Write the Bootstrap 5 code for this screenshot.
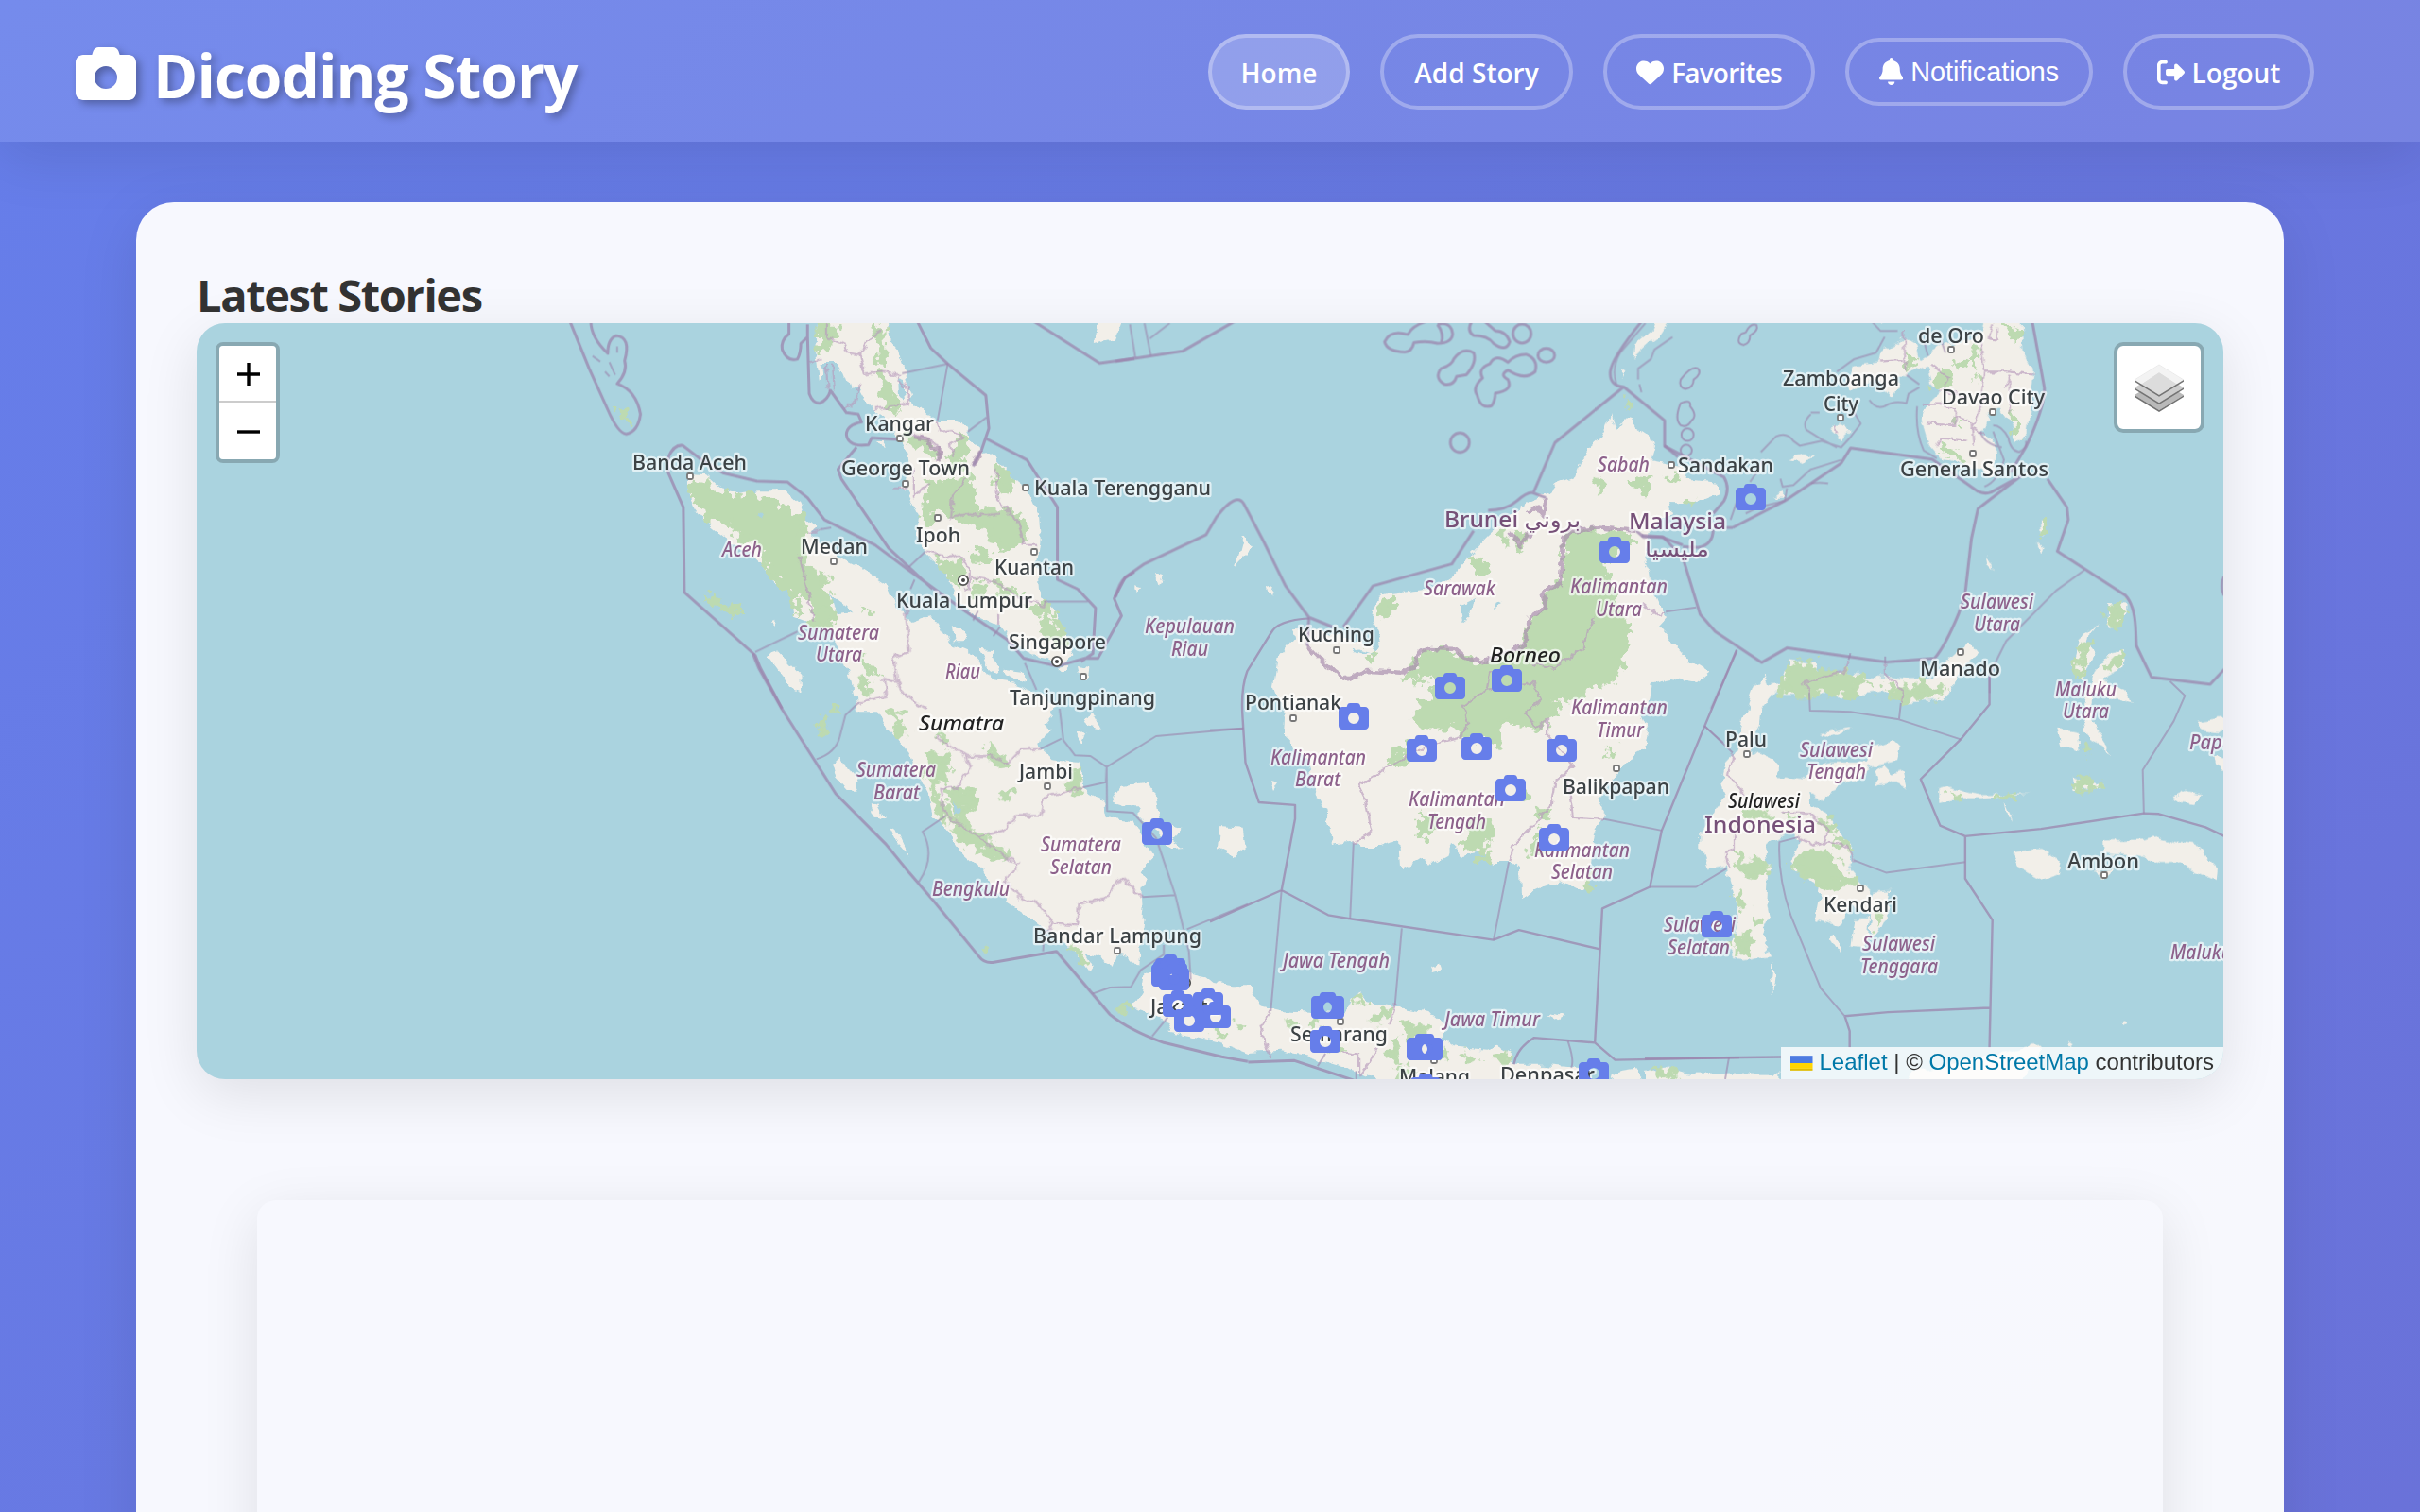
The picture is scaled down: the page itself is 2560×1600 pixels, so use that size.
<!DOCTYPE html>
<html lang="en">
<head>
<meta charset="utf-8">
<meta name="viewport" content="width=device-width, initial-scale=1">
<title>Dicoding Story</title>
<link href="https://cdn.jsdelivr.net/npm/bootstrap@5.3.0/dist/css/bootstrap.min.css" rel="stylesheet">
<style>
html, body { height: 1600px; overflow: hidden; }
body { font-family: "Open Sans", "Noto Sans", sans-serif; color: #333; background: linear-gradient(135deg, #667eea 0%, #764ba2 100%) 0 0 / 100% 15000px no-repeat; }
.topbar { height: 150px; padding: 36px 112px 34px 80px; background: rgba(255,255,255,.1); box-shadow: 0 16px 64px rgba(0,0,0,.1); }
.brand-title { font-size: 64px; font-weight: 700; line-height: 72px; letter-spacing: -1px; gap: 18px; text-shadow: 4px 4px 8px rgba(0,0,0,.3); white-space: nowrap; }
.brand-title span { padding-top: 8px; }
.brand-title svg { width: 64px; height: 64px; margin-top: 4px; filter: drop-shadow(4px 4px 4px rgba(0,0,0,.3)); }
.topnav { gap: 32px; }
.pill { height: 80px; border: 4px solid rgba(255,255,255,.3); border-radius: 50px; font-size: 28px; font-weight: 600; color: #fff; gap: 8px; white-space: nowrap; text-decoration: none; background: none; padding: 1px 0 0; line-height: 40px; }
.pill.current { background: rgba(255,255,255,.2); }
.pill svg { height: 29px; flex: none; margin-bottom: 1px; }
.w-home { width: 150px; } .w-add { width: 204px; } .w-fav { width: 224px; letter-spacing: -.8px; } .w-note { width: 262px; } .w-out { width: 202px; }
.pill.w-note { height: 72px; font: 400 28.8px "Liberation Sans", Arial, sans-serif; }
.pill.w-note svg { height: 29px; margin-bottom: 3px; }
.panel { margin: 64px 144px 0; padding: 64px; height: 1700px; border-radius: 40px; background: rgba(255,255,255,.95); box-shadow: 0 16px 64px rgba(0,0,0,.1); }
.panel h2 { font-size: 47px; font-weight: 700; line-height: 60px; padding-top: 4px; letter-spacing: -1.4px; color: #333; }
.story-map { height: 800px; border-radius: 30px; background: #aad3df; box-shadow: 0 16px 60px rgba(0,0,0,.1); }
.story-list { margin: 128px 64px 0; height: 900px; border-radius: 20px; box-shadow: 0 16px 60px rgba(0,0,0,.1); }
.land path { fill: #f2efe9; }
.wood path { fill: #bddab1; stroke: #bddab1; stroke-width: 5px; vector-effect: non-scaling-stroke; stroke-linejoin: round; }
.sea path { fill: #aad3df; }
.edge path, .edge ellipse { fill: none; stroke: #9b86ae; stroke-opacity: .75; stroke-width: 3px; vector-effect: non-scaling-stroke; stroke-linejoin: round; }
.edge .thin { stroke-width: 2px; stroke-opacity: .6; }
.edge .prov { stroke: #b79abb; stroke-width: 2.2px; stroke-opacity: .65; }
.edge .state { stroke: #a98fae; stroke-width: 4.5px; stroke-opacity: .7; }
.names text { font-family: "Noto Sans", "DejaVu Sans", sans-serif; font-size: 21.5px; font-weight: 500; paint-order: stroke; stroke: #fff; stroke-opacity: .65; stroke-width: 4.5px; stroke-linejoin: round; fill: #3c4245; }
.names .region { font-style: italic; fill: #8d618b; font-size: 21px; }
.names .isle { font-style: italic; fill: #222; }
.names .nation { fill: #765078; font-size: 23px; }
.ctl { border: 4px solid rgba(0,0,0,.2); border-radius: 8px; background-clip: padding-box; }
.zoomer { left: 20px; top: 20px; width: 68px; height: 128px; }
.zoomer button { height: 60px; background: #fff; border: 0; padding: 2px 0 0 2px; }
.zoomer button:first-child { border-bottom: 2px solid #ccc; border-radius: 4px 4px 0 0; }
.zoomer button:last-child { border-radius: 0 0 4px 4px; }
.layers { right: 20px; top: 20px; width: 96px; height: 96px; border-radius: 10px; background-color: #fff; }
.credit { right: 0; bottom: 0; height: 34px; padding: 0 10px; background: rgba(255,255,255,.8); font: 24px/32px "Liberation Sans", Arial, sans-serif; white-space: pre; width: 468px; border-radius: 0 0 30px 0; }
.credit span { padding-bottom: 2px; }
.credit a { color: #0078a8; text-decoration: none; }
.credit svg { width: 24px; height: 16px; margin-right: 7px; }
</style>
<script src="https://cdn.jsdelivr.net/npm/bootstrap@5.3.0/dist/js/bootstrap.bundle.min.js"></script>
</head>
<body>
<svg width="0" height="0" class="position-absolute" aria-hidden="true">
  <symbol id="camera" viewBox="0 0 512 512"><path fill="currentColor" d="M149.1 64.8L138.7 96H64C28.7 96 0 124.7 0 160V416c0 35.300 28.700 64 64 64H448c35.300 0 64-28.700 64-64V160c0-35.300-28.700-64-64-64H373.300L362.900 64.800C356.400 45.200 338.100 32 317.400 32H194.600c-20.700 0-39 13.200-45.500 32.800zM256 192a96 96 0 1 1 0 192 96 96 0 1 1 0-192z"/></symbol>
</svg>

<header class="topbar d-flex justify-content-between align-items-center text-white">
  <div class="brand-title d-flex align-items-center"><svg viewBox="0 0 512 512"><use href="#camera"/></svg><span>Dicoding Story</span></div>
  <nav class="topnav d-flex align-items-center">
    <a class="pill current w-home d-flex align-items-center justify-content-center" href="#">Home</a>
    <a class="pill w-add d-flex align-items-center justify-content-center" href="#">Add Story</a>
    <a class="pill w-fav d-flex align-items-center justify-content-center" href="#"><svg viewBox="0 0 512 512"><path fill="currentColor" d="M47.6 300.4L228.3 469.1c7.5 7 17.4 10.9 27.7 10.9s20.2-3.9 27.7-10.9L464.4 300.4c30.4-28.3 47.600-68 47.600-109.500v-5.800c0-69.900-50.500-129.500-119.400-141C347 36.500 300.600 51.400 268 84L256 96 244 84c-32.600-32.600-79-47.500-124.600-39.900C50.500 55.600 0 115.200 0 185.100v5.800c0 41.500 17.200 81.200 47.600 109.500z"/></svg><span>Favorites</span></a>
    <button class="pill w-note d-flex align-items-center justify-content-center"><svg viewBox="0 0 448 512"><path fill="currentColor" d="M224 0c-17.7 0-32 14.300-32 32V51.200C119 66 64 130.600 64 208v18.800c0 47-17.300 92.400-48.500 127.600l-7.400 8.300c-8.400 9.400-10.400 22.900-5.300 34.400S19.400 416 32 416H416c12.600 0 24-7.400 29.200-18.900s3.100-25-5.300-34.400l-7.400-8.300C401.300 319.200 384 273.900 384 226.800V208c0-77.400-55-142-128-156.800V32c0-17.700-14.300-32-32-32zm45.300 493.300c12-12 18.700-28.300 18.700-45.300H224 160c0 17 6.700 33.300 18.700 45.300s28.300 18.700 45.300 18.700s33.300-6.700 45.300-18.700z"/></svg><span>Notifications</span></button>
    <a class="pill w-out d-flex align-items-center justify-content-center" href="#"><svg viewBox="0 0 512 512"><path fill="currentColor" d="M377.900 105.900L500.700 228.700c7.200 7.200 11.300 17.100 11.300 27.300s-4.100 20.100-11.300 27.300L377.900 406.100c-6.400 6.400-15 9.900-24 9.900c-18.700 0-33.900-15.200-33.900-33.900l0-62.100-128 0c-17.700 0-32-14.300-32-32l0-64c0-17.700 14.300-32 32-32l128 0 0-62.100c0-18.700 15.200-33.900 33.900-33.900c9 0 17.600 3.600 24 9.900zM160 96L96 96c-17.700 0-32 14.300-32 32l0 256c0 17.700 14.300 32 32 32l64 0c17.700 0 32 14.300 32 32s-14.300 32-32 32l-64 0c-53 0-96-43-96-96L0 128C0 75 43 32 96 32l64 0c17.700 0 32 14.300 32 32s-14.300 32-32 32z"/></svg><span>Logout</span></a>
  </nav>
</header>

<main class="panel">
  <h2 class="m-0">Latest Stories</h2>
  <div class="story-map position-relative" id="map">
    <svg class="d-block" width="2144" height="800" viewBox="208 342 2144 800" style="border-radius:30px">
      <defs>
        <filter id="coast" filterUnits="userSpaceOnUse" x="200" y="330" width="2160" height="820" color-interpolation-filters="sRGB"><feTurbulence type="fractalNoise" baseFrequency=".07" numOctaves="3" seed="4"/><feDisplacementMap in="SourceGraphic" scale="11" xChannelSelector="R" yChannelSelector="G"/></filter>
        <filter id="grove" filterUnits="userSpaceOnUse" x="200" y="330" width="2160" height="820" color-interpolation-filters="sRGB"><feTurbulence type="fractalNoise" baseFrequency=".09" numOctaves="3" seed="9"/><feDisplacementMap in="SourceGraphic" scale="24" xChannelSelector="R" yChannelSelector="G"/></filter>
        <filter id="wiggle" filterUnits="userSpaceOnUse" x="200" y="330" width="2160" height="820" color-interpolation-filters="sRGB"><feTurbulence type="fractalNoise" baseFrequency=".12" numOctaves="2" seed="2"/><feDisplacementMap in="SourceGraphic" scale="8" xChannelSelector="R" yChannelSelector="G"/></filter>
      </defs>

      <g class="land" filter="url(#coast)">
        <!-- north Sumatra, Malay peninsula -->
        <g transform="translate(640 330) scale(.35714 .33333)">
          <path d="M250 515L300 520 340 560 400 575 450 568 530 568 575 610 590 650 628 685 610 715 680 770 760 815 830 865 848 905 870 945 900 980 935 1005 945 972 985 980 1010 1030 1050 1100 1110 1120 1130 1170 1180 1210 1200 1270 745 1270 730 1180 710 1110 690 1060 670 1010 620 990 560 965 550 900 500 850 460 790 380 740 300 670 265 620 242 560Z"/>
          <path d="M628 20L622 130 632 215 645 200 640 165 690 165 710 200 725 245 750 240 770 280 800 310 830 330 870 400 895 450 900 520 890 560 910 600 930 650 925 700 945 760 1000 820 1025 870 1050 930 1110 970 1170 1000 1200 1050 1290 1100 1360 1115 1390 1090 1370 1040 1340 960 1310 915 1285 880 1280 800 1290 720 1285 640 1250 560 1200 520 1160 470 1110 430 1080 400 1050 345 990 345 950 330 915 290 900 240 885 170 870 120 845 90 835 20Z"/>
          <path d="M1462 20H1535L1510 90 1450 105ZM1030 1000L1070 1010 1065 1045 1035 1045ZM480 1090L515 1078 578 1150 580 1205 555 1195ZM810 405L835 405 825 435ZM490 985L505 980 505 1000ZM870 555L890 560 880 575ZM1330 1130L1370 1125 1350 1150ZM1400 1125L1435 1130 1430 1170 1405 1150Z"/>
        </g>
        <!-- rest of Sumatra, Bangka, Belitung, Mentawai -->
        <g transform="translate(680 640) scale(.40816 .33333)">
          <path d="M510 60L530 160 540 230 553 310 610 340 640 400 690 470 710 540 740 610 750 660 790 720 830 790 885 850 900 890 940 940 990 980 1040 1030 1100 1080 1140 1130 1160 1165 1168 1150 1150 1110 1180 1120 1220 1145 1225 1110 1260 1120 1287 1155 1290 1080 1295 1020 1300 960 1297 900 1305 875 1295 850 1310 810 1322 795 1300 750 1280 710 1270 685 1200 675 1190 620 1160 600 1145 580 1140 520 1130 498 1060 490 1025 450 1030 420 1065 400 1040 380 1060 350 1065 320 1040 290 1000 270 960 250 900 240 880 190 850 150 790 120 770 70 750 40 725 45 690 60 680 20 600 0 520 0Z"/>
          <path d="M1215 630L1245 575 1310 562 1330 610 1340 690 1400 708 1375 740 1405 768 1370 772 1330 720 1290 685 1290 640 1240 640ZM1495 705L1555 710 1562 770 1535 795 1490 770ZM1140 360L1165 340 1190 395 1150 385ZM1120 410L1150 405 1138 445ZM490 500L520 482 560 590 530 590 500 550ZM592 630L605 635 625 680 605 670ZM640 700L655 705 695 805 665 760ZM870 140L910 145 920 215 895 200ZM930 200L990 210 990 250 940 225Z"/>
        </g>
        <!-- Borneo -->
        <path d="M1700 450L1704 438 1708 455 1718 443 1723 438 1731 453 1746 463 1750 473 1746 487 1778 493 1792 510 1819 513 1819 522 1792 533 1766 532 1769 543 1755 550 1750 560 1743 570 1739 593 1746 607 1748 623 1754 637 1765 652 1755 663 1769 680 1787 700 1808 713 1796 722 1769 717 1748 721 1744 747 1735 754 1744 775 1741 793 1723 803 1709 821 1696 832 1691 849 1697 861 1687 881 1685 898 1682 923 1684 930 1673 942 1651 931 1630 938 1609 948 1608 921 1598 912 1580 912 1562 902 1548 905 1534 893 1530 905 1514 914 1501 909 1482 919 1480 888 1459 896 1441 896 1423 888 1409 891 1403 858 1394 842 1384 807 1359 779 1360 758 1348 726 1353 695 1369 674 1367 667 1400 668 1421 673 1455 690 1463 677 1452 653 1457 632 1471 628 1517 623 1536 610 1555 587 1574 567 1601 543 1620 530 1645 520 1643 512 1666 503 1677 477 1693 463Z"/>
        <path d="M1307 600L1316 566 1326 580 1312 594ZM1222 608L1230 610 1226 620ZM1201 620L1208 622 1203 630ZM1342 622L1348 620 1345 632ZM1514 1023L1521 1020 1523 1026 1516 1028ZM1637 1072L1655 1076 1648 1080ZM1345 828L1352 830 1348 836Z"/>
        <!-- Mindanao, Palawan, Sulu -->
        <g transform="translate(1640 330) scale(.45918 .33333)">
          <path d="M278 20L250 80 225 105 190 150 195 100 230 60 240 20ZM815 80L790 110 765 130 760 160 700 170 680 220 690 250 740 210 760 230 790 270 808 230 790 200 820 205 870 170 880 230 900 250 870 290 855 350 870 420 900 470 960 490 1020 520 1030 440 995 390 1010 320 1040 310 1060 350 1075 415 1097 380 1105 280 1112 190 1090 130 1085 20 1000 20 980 90 900 110 850 150 840 100ZM645 375L665 360 692 380 670 405ZM550 465L580 452 605 460 580 480ZM515 590L535 570 545 590ZM165 180L175 190 168 210ZM740 20L780 20 765 45ZM1003 775L1020 795 1022 820 1008 800ZM1130 670L1140 665 1145 690 1132 710ZM1125 730L1140 750 1135 770Z"/>
        </g>
        <!-- Sulawesi, Moluccas -->
        <g transform="translate(1740 600) scale(.39541 .35077)">
          <path d="M320 320L330 355 365 350 385 280 450 290 470 320 600 330 640 330 700 340 780 340 800 290 830 260 865 225 890 260 860 290 830 340 800 400 690 410 640 375 560 385 420 385 340 385 310 430 305 480 285 520 290 560 340 580 360 630 430 640 450 600 500 590 600 590 610 540 660 525 682 550 675 585 600 605 560 640 500 670 480 700 440 680 450 720 490 745 520 800 560 850 545 910 575 950 600 980 620 1010 600 1050 550 1020 520 1080 455 1060 470 970 410 920 390 890 415 830 390 800 320 840 330 900 325 1000 335 1060 315 1110 340 1175 260 1190 230 1150 250 1080 240 1000 225 940 220 900 165 910 150 860 150 800 190 730 215 690 205 640 215 590 240 560 262 470 272 420 290 360Z"/>
          <path d="M560 1060L600 1060 590 1150 550 1145ZM610 980L658 975 650 1040 625 1100 600 1120ZM495 1120L510 1110 522 1130 518 1160ZM340 1200L348 1240 342 1290 337 1240ZM610 620L640 600 660 625 690 615 700 670 655 645 620 655ZM1212 165L1190 190 1160 220 1142 300 1165 335 1185 300 1205 260 1185 230 1190 200ZM1200 320L1240 265 1290 250 1280 300 1220 340 1280 370 1305 412 1200 375 1190 440 1205 490 1250 565 1190 520 1172 460 1180 400ZM1108 488L1160 500 1165 550 1120 540ZM1240 110L1285 115 1270 180 1238 175ZM1145 630L1225 660 1150 675ZM790 670L815 662 860 680 900 688 1030 685 900 700 830 700 790 712ZM960 705L985 770 965 740ZM980 860L1060 850 1115 890 1110 925 1060 948 1000 910ZM1225 828L1330 825 1370 815 1420 830 1480 840 1510 880 1535 910 1532 950 1470 920 1430 890 1380 890 1320 870 1225 860ZM1200 920L1260 910 1230 940ZM1470 470L1560 455V500L1490 490ZM1520 570L1560 580V625L1525 600ZM1410 695L1450 675 1490 685 1475 715 1430 710ZM940 1475L1040 1440 1060 1460 1000 1560 700 1560 720 1520ZM0 1520L60 1510 120 1530 200 1530 360 1530V1560H0ZM470 500L560 480 500 510ZM1270 1372L1285 1380 1275 1388ZM1130 1430L1145 1440 1135 1450Z"/>
        </g>
        <!-- Java, Bali -->
        <g transform="translate(1100 960) scale(.40816 .33333)">
          <path d="M265 330L240 320 265 270 270 220 290 200 390 210 430 220 450 240 500 250 545 250 570 315 620 330 700 335 790 340 805 290 830 272 850 300 905 310 960 325 1020 340 1050 370 1045 420 1070 445 1160 455 1190 440 1225 465 1230 500 1300 500 1400 510 1440 560 900 560 820 520 700 475 620 455 540 462 470 430 400 410 330 395 340 370ZM1310 335L1360 345 1340 355ZM1490 520L1540 510 1568 560H1480Z"/>
        </g>
      </g>

      <g class="wood" filter="url(#grove)">
        <g transform="translate(640 330) scale(.35714 .33333)">
          <path d="M250 545L290 550 340 580 400 585 460 592 530 620 580 660 590 690 570 760 610 830 670 850 640 870 685 950 670 990 625 985 600 900 560 890 530 880 500 830 470 790 480 750 420 720 370 680 320 650 270 610Z"/>
          <path d="M300 895L400 955 385 962 315 920ZM560 900L575 950 565 955ZM635 40H690L680 90 640 130ZM795 50L820 60 825 160 810 140ZM815 190L830 200 860 310 835 300ZM890 405L950 405 985 460 960 445ZM1055 395L1085 440 1060 490 1020 480ZM1165 490L1200 515 1195 570 1165 560ZM960 545L1070 530 1095 560 1090 620 1240 650 1245 700 1200 750 1160 735 1130 690 1060 660 1010 635 980 620 960 670 940 655ZM1090 745L1135 770 1110 795ZM980 785L1050 800 1060 865 1030 850ZM1170 865L1215 895 1170 905ZM1245 935L1305 930 1325 955 1280 965ZM1310 975L1345 1000 1355 1055 1295 1030ZM1095 855L1125 870 1110 905ZM770 940L778 955 768 960ZM755 1095L800 1150 790 1145ZM765 1165L795 1205 772 1195Z"/>
        </g>
        <g transform="translate(680 640) scale(.40816 .33333)">
          <path d="M445 0L485 0 495 40 470 60 445 50ZM462 360L476 390 470 425 460 415ZM485 334H510V338H485ZM645 342L675 350 660 365ZM660 372L682 405 662 405ZM745 470L785 480 790 555 765 570 735 540ZM735 550L790 650 850 720 940 780 936 810 880 775 835 765 795 690 765 640ZM795 582L858 592 860 645 830 640 848 705 805 640ZM902 455L955 510 940 525 902 490ZM925 602L955 602 948 615ZM1130 520L1135 570 1112 595 1105 560ZM1105 1085L1150 1130 1140 1135ZM885 1083L905 1098 892 1096ZM565 230L595 275 572 268ZM765 412L785 412 780 435Z"/>
        </g>
        <path d="M1658 567L1677 563 1717 563 1729 573 1700 590 1693 607 1704 613 1706 637 1714 650 1723 670 1716 698 1707 719 1680 728 1669 738 1644 740 1646 758 1623 770 1601 763 1585 765 1585 791 1576 780 1546 780 1550 768 1501 768 1494 754 1514 740 1518 726 1514 712 1488 717 1500 705 1500 695 1516 688 1537 691 1566 704 1609 692 1619 656 1636 644 1634 626 1652 618 1656 600Z"/>
        <path d="M1471 810L1485 790 1488 796 1485 811ZM1548 898L1554 870 1576 868 1580 880 1568 898ZM1504 862L1518 866 1510 888 1502 884ZM1564 905L1578 902 1574 914ZM1627 866L1632 860 1638 862 1630 870ZM1618 898L1636 890 1632 904ZM1557 592L1570 594 1573 602 1562 606ZM1588 562L1591 560 1591 574ZM1604 568L1614 564 1612 576 1607 575ZM1460 640L1474 635 1476 645 1463 650ZM1448 690L1456 693 1452 696ZM1688 508L1696 510 1694 518 1688 514ZM1724 508L1744 510 1742 518 1729 515ZM1762 507L1776 505 1770 509ZM1784 527L1790 530 1785 532ZM1682 936L1685 924 1678 938ZM1702 790L1706 793 1703 800ZM1500 720L1508 722 1504 726ZM1608 840L1616 838 1616 846ZM1625 880L1632 884 1624 888Z"/>
        <g transform="translate(1640 330) scale(.45918 .33333)"><path d="M925 155L955 162 945 178ZM972 105L983 112 980 175 967 150ZM902 185L925 220 900 235 885 235ZM1045 35L1080 60 1078 95 1062 70ZM932 325L943 355 927 345ZM905 425L945 460 955 475 912 448ZM1072 335L1078 395 1072 390ZM822 135L833 150 825 175ZM178 285L190 288 180 300ZM982 205L988 225 982 225ZM1133 675L1140 685 1135 705Z"/></g>
        <g transform="translate(1740 600) scale(.39541 .35077)">
          <path d="M370 365L388 285 445 295 450 318 555 325 598 355 560 362 560 380 440 380 380 380ZM650 355L690 370 700 378 738 370 730 352 755 348 760 370 795 362 790 388 690 400 655 383ZM265 740L338 740 342 756 272 756ZM375 742L405 747 400 752ZM474 760L492 765 510 798 484 788ZM420 865L495 865 508 900 560 948 480 965 432 935 395 893ZM505 825L535 832 545 847 512 838ZM245 855L262 900 300 885 320 897 318 930 262 926ZM252 985L268 1020 257 1030ZM245 1105L285 1122 268 1162 243 1158ZM297 1055L308 1078 300 1076ZM617 1045L628 1045 622 1085ZM1242 123L1280 115 1266 172 1242 172ZM1150 642L1180 632 1218 663 1155 670ZM1168 230L1200 234 1170 260 1160 322 1158 290ZM1240 300L1280 255 1272 298 1250 312ZM1174 548L1188 548 1188 556 1175 555ZM823 683L845 683 838 690ZM935 692H985V694H935ZM25 1518L58 1514 84 1538 52 1538Z"/>
        </g>
        <g transform="translate(1100 960) scale(.40816 .33333)"><path d="M452 384L475 400 460 406ZM504 372L526 380 511 383ZM205 317L235 312 232 325ZM815 288L845 300 822 298ZM864 352L900 328 896 345 862 362ZM705 380L725 372 710 386ZM945 374L1005 382 988 398 950 416ZM922 415L936 490 902 468ZM1104 474L1135 482 1110 492ZM1175 474L1222 474 1200 495ZM935 514L975 532 922 540ZM1042 455L1055 485 1046 482ZM645 370L665 368 650 380ZM763 433L785 450 762 452Z"/></g>
        <path d="M657 434L662 431 664 440 662 446 658 440Z"/>
      </g>

      <!-- lakes and bays -->
      <g class="sea" filter="url(#coast)"><path d="M880 630L894 640 902 648 886 650ZM950 400L956 402 958 424 951 420ZM802 545L808 546 806 550ZM1544 640L1560 632 1556 652 1546 660ZM1580 636L1588 638 1578 644ZM1008 846L1016 858 1010 862ZM1430 686L1456 694 1440 692Z"/></g>

      <g class="edge" filter="url(#wiggle)">
        <g transform="translate(1180 330) scale(.38265 .33333)">
          <path class="state" d="M530 1060L570 1110 640 1165 700 1140 790 1145 828 1125 840 1080 870 1068 935 1070 960 1095 1010 1115 1060 1090 1130 1060 1145 970 1190 940 1180 890 1230 860 1240 720 1260 695 1330 685 1440 695"/>
          <path class="state" d="M1090 700L1120 740 1145 700M1140 640L1165 620 1185 650 1190 590"/>
        </g>
        <g transform="translate(640 330) scale(.35714 .33333)">
          <path class="prov" d="M655 36L655 80 710 100 720 130 755 135 770 200 815 190 880 205M750 135L790 80 820 60M755 230L745 280 710 310M800 310L895 290 900 250 870 210M985 345L990 380 1030 375 1060 400 1025 420 1030 460M1160 490L1165 600 1210 650 1230 690 1240 740 1280 740M1020 655L1080 640 1130 645 1170 640M1070 530L1030 580 1025 655M950 760L1020 780 1050 770 1080 820 1080 880 1060 880M1080 840L1150 855 1240 910 1300 935 1310 915M915 500L915 585 960 540M600 700L640 690M575 770L600 880 620 980M1165 960L1165 1000M640 150L605 160M655 170L660 250M675 170L680 250M900 380L950 400 990 430 990 470M900 560L860 560"/>
          <path class="state" d="M915 395L955 405 965 430 990 435 990 475M1090 490L1115 440"/>
        </g>
        <g transform="translate(680 640) scale(.40816 .33333)">
          <path class="prov" d="M560 310L630 290 625 235 660 245 650 165 690 150 680 0M660 245L680 290 735 330M760 420L840 480 850 520 815 580 770 585 785 670M840 480L910 480 945 505 980 460 1030 458M785 670L870 735 945 805 975 820 940 880 980 930 1025 950 1065 1015 1040 1050M1065 1015L1125 1020 1130 950 1200 930 1240 865 1295 928M870 735L930 720 970 670 1030 670 1040 610 1140 580"/>
        </g>
        <g transform="translate(1280 600) scale(.35714 .35077)">
          <path class="prov" d="M425 835L480 800 460 700 440 660 520 610 640 540 740 515 765 470 750 420 820 370 830 310M820 370L960 350 980 400 935 440 965 485 1000 460 1000 510 1075 600 1020 650 1010 720 900 840 885 890M1060 640L1075 755 1165 760M950 290L1020 305 1110 240 1120 190 1140 150M1280 110L1330 150 1350 135M180 1340L150 1390 180 1480M548 1320L530 1380M390 1460L440 1470 440 1540M495 1450L470 1500 440 1540"/>
        </g>
        <g transform="translate(1740 600) scale(.39541 .35077)">
          <path class="prov" d="M545 280L530 320 500 325 425 350 440 380M643 290L645 330 690 370 685 410M560 885L540 840 480 830 450 840 410 815M235 560L225 630 270 690M240 810L240 850 215 865 225 905M370 740L440 745 490 790 480 830"/>
        </g>
        <g transform="translate(1640 330) scale(.45918 .33333)">
          <path class="prov" d="M815 60L818 190M760 155L812 150M865 355L930 360 935 310 900 290 860 290M930 330L970 350 975 420M960 410L900 400 890 430M990 90L1000 190 1060 190 1115 200M1060 200L1050 240M1000 270L970 370 1000 390M1020 40L1010 85 1030 90 1030 50M1060 200L1060 320M880 170L920 210 900 250 960 270M1000 190L990 270M655 360L660 388"/>
        </g>
      </g>

      <g class="edge">
        <g transform="translate(200 330) scale(.35714 .33333)"><path d="M1128 30L1185 180 1240 310Q1270 385 1295 388 1330 380 1337 325 1325 250 1268 228 1300 190 1290 155 1310 80 1265 76 1240 85 1240 132 1190 80 1190 30"/><path class="thin" d="M1195 140L1218 158M1245 160L1262 200M1232 190L1245 205M1268 110V130"/></g>
        <g transform="translate(640 330) scale(.35714 .33333)">
          <path d="M188 460Q205 420 230 424L280 465 350 512 450 537 540 540 600 590 650 660 800 740 900 820 1060 945 1190 1040 1240 1100 1340 1125 1420 1100 1460 1100 1530 965 1508 910 1540 845 1568 825M188 460L187 510 232 620 235 890 445 1090 460 1130 525 1260M925 30L965 115 1015 165 1128 265 1137 370 1115 440 1090 490M1130 403L1250 470 1340 620 1340 850 1400 880 1453 940 1445 1085 1410 1110M745 430L690 500 700 530 840 750 970 880M545 30V70Q520 90 525 120 540 160 570 150 580 130 580 100L600 80V40M600 80L605 260Q615 290 635 290 660 280 668 250L715 320 750 325 760 350Q715 360 715 390 720 430 780 422L790 400 870 405M1270 30L1465 163 1568 148"/>
          <path class="thin" d="M880 195L1015 165 985 345M1075 380L1130 335M900 810L950 760M905 880L917 850M445 1080L570 1015M640 690L670 685M1090 980L1105 950M1150 1030L1170 1000M1300 920L1430 920"/>
        </g>
        <g transform="translate(1180 330) scale(.38265 .33333)">
          <path d="M0 157L185 125 330 30M0 905Q10 860 28 842L80 800 250 708 280 650Q335 570 355 610L410 730 470 870 535 970 600 1000M1155 575L1215 415 1405 238 1518 345V425L1555 460M1405 238Q1365 235 1368 190 1370 150 1455 30M1030 630Q1080 630 1110 600 1140 570 1155 575L1190 590M990 695L930 800 712 870 630 1000M1440 695L1460 715 1510 715 1568 740M535 970L530 1060"/>
          <path d="M860 30Q820 45 808 72 760 55 744 95 750 125 800 128 820 125 825 98 860 90 890 100 930 100 932 70 928 30 890 40M890 40Q910 70 900 100M985 30Q970 60 990 75 1030 75 1045 100 1080 130 1090 95 1080 60 1050 60L1020 30M943 205Q935 235 910 230 880 210 900 180 930 170 935 150 960 110 990 130 1000 160 970 200ZM1085 160Q1050 130 1035 165 1000 180 1015 210 985 240 1000 265 1010 310 1040 298 1050 280 1050 258 1100 250 1085 215 1060 200 1085 185 1130 220 1160 190 1170 150 1135 135 1105 135 1085 160Z"/>
          <ellipse cx="1124" cy="69" rx="25" ry="30"/><ellipse cx="1191" cy="138" rx="23" ry="22"/><ellipse cx="952" cy="415" rx="26" ry="31"/>
          <path class="thin" d="M40 40L55 145M80 36L98 140M95 85L150 36M1385 230Q1370 180 1395 130L1465 36M1445 215V180L1480 150 1490 120 1540 80"/>
        </g>
        <g transform="translate(1640 330) scale(.45918 .33333)">
          <path d="M262 425L400 525Q415 560 400 600L375 640M420 685L540 600 670 480 692 432 880 468 985 570Q1000 580 1015 573L1085 520M1145 530L1190 620 1193 660 1168 760 1325 900Q1345 930 1348 1000L1350 1060 1385 1160 1520 1182 1556 1130M1110 30L1138 240Q1140 300 1095 430M1085 520L985 625 970 720 955 900 940 960Q910 1060 885 1100L775 1112 690 1095 545 1067 487 1113 380 1015 345 960 305 780 260 715 210 710M420 685H405M375 690Q375 740 340 748L305 745M1552 840Q1542 870 1552 900M1095 430L1060 510"/>
          <path class="thin" d="M1230 820L1165 885 1050 1045 1012 1150V1210M430 1075L370 1260M485 445L520 395Q545 380 560 410L575 425 625 410 670 430 690 400 715 355 700 320M600 320L620 320M600 325Q580 350 590 375L625 405 660 430M530 530L535 555 560 550 600 500 670 470M460 540L480 500 490 470M415 660L430 600M450 640L480 620 540 600M540 600L545 560M740 30L760 60 800 60M770 80L750 130 700 150 660 190M735 280Q750 310 770 300 790 280 820 290L825 260 850 240M845 300Q840 380 860 440L890 465M1020 360Q1040 360 1055 400 1060 440 1080 445 1100 430 1095 410M1000 555Q1030 540 1045 470L1020 380M640 545Q620 540 600 545M990 380Q1000 420 1040 430"/>
          <path d="M300 215Q325 170 340 180 350 195 330 215 330 240 312 245 295 240 300 215ZM450 65Q460 35 475 42 480 60 460 75 460 100 445 105 425 100 440 70ZM300 290Q325 275 322 300 340 330 325 345 315 370 300 360 285 340 300 290Z" style="stroke-width:2px"/><ellipse cx="316" cy="390" rx="14" ry="20" style="stroke-width:2px"/><ellipse cx="313" cy="440" rx="13" ry="18" style="stroke-width:2px"/>
          <path class="thin" d="M860 90L870 140M900 90L910 130M820 200L850 230M205 230L210 255"/>
        </g>
        <g transform="translate(680 640) scale(.40816 .33333)">
          <path d="M285 155L300 200 360 330 500 600 630 760 690 850 750 935 870 1115Q885 1140 910 1135L1072 1100 1210 1300Q1260 1350 1350 1390L1500 1435 1568 1450"/>
          <path class="thin" d="M450 490Q500 470 510 420L525 350 560 310M785 670L725 720Q760 800 715 880M1030 458L1085 425M1295 928L1380 922M1140 580L1200 563 1202 515 1160 480 1120 478 1090 430 1080 330M1202 515L1330 417 1555 393M1202 515L1203 655 1270 660 1330 740 1380 922 1415 1100 1420 1190M1410 1030L1568 950M990 185L1020 270M1165 1235L1210 1215 1265 1213 1290 1160 1350 1110V1080M1040 1050L1037 1100M1320 1370L1360 1310"/>
        </g>
        <g transform="translate(1100 960) scale(.40816 .33333)"><path d="M540 492L660 487 815 550"/><path class="thin" d="M720 505L740 465M820 546V520"/></g>
        <g transform="translate(1280 600) scale(.35714 .35077)">
          <path style="stroke-width:2.4px" d="M295 155Q200 160 180 200L110 315Q90 370 97 460L105 590 145 710 252 718V760L212 975 350 1050 420 1062 840 1125 915 1095 1155 1153M0 1070L212 975M1560 250L1465 480 1338 795 1303 965 1162 1030 1140 1435 960 1420Q910 1450 900 1500M1140 1435L1200 1487 1568 1480"/>
          <path class="thin" d="M212 975L180 1340M425 835L415 1060M885 890L840 1125M568 1090L548 1320M1165 760L1338 795M1303 965H1440L1530 910M1465 480L1520 530M0 492L100 487M1350 135L1440 122M1060 1430Q1080 1490 1070 1510"/>
        </g>
        <g transform="translate(1740 600) scale(.39541 .35077)">
          <path style="stroke-width:2.4px" d="M922 330V415L845 520 738 640 790 780 857 812V940L930 1065 922 1450M857 812L1060 790 1335 743 1375 745 1500 785 1556 815M535 1355L548 1400V1450M0 1483L364 1478M535 1355L650 1343 922 1330"/>
          <path class="thin" d="M1335 743L1332 612 1415 465 1445 388 1405 345M550 260L545 280M643 270V290M440 380L442 433 550 437 680 460 845 520M685 410L680 460M857 890L645 922 560 885M410 815L360 830Q355 930 390 1050L470 1270 535 1355M160 480L235 560M225 1480L215 1545"/>
        </g>
      </g>

      <g id="dots" fill="#fff" stroke="#777" stroke-width="1.8"></g>
      <g id="names" class="names"></g>
      <g id="pins" color="#667eea"></g>
    </svg>

    <div class="ctl zoomer position-absolute d-flex flex-column">
      <button class="d-flex align-items-center justify-content-center" aria-label="Zoom in"><svg width="24" height="24" viewBox="0 0 24 24"><path d="M0 12H24M12 0V24" stroke="#000" stroke-width="3.400"/></svg></button>
      <button class="d-flex align-items-center justify-content-center" aria-label="Zoom out"><svg width="24" height="24" viewBox="0 0 24 24"><path d="M0 12H24" stroke="#000" stroke-width="3.400"/></svg></button>
    </div>
    <div class="ctl layers position-absolute d-flex align-items-center justify-content-center">
      <svg width="52" height="52" viewBox="0 0 26 26">
        <path fill="#b9b9b9" d="M.032 17.056l13-8 13 8-13 8z"/><path fill="#737373" d="M.032 17.056l-.032.93 13 8 13-8 .032-.93-13 8z"/>
        <path fill="#cdcdcd" d="M0 13.076l13-8 13 8-13 8z"/><path fill="#737373" d="M0 13.076v.91l13 8 13-8v-.91l-13 8z"/>
        <path fill="#e9e9e9" fill-opacity=".585" stroke="#adadad" stroke-width=".1" d="M0 8.986l13-8 13 8-13 8-13-8"/><path fill="#f3f3f3" d="M.3 8.986L13 1.200l12.700 7.786-3.500 2.200L13 5.100 3.800 11.190z"/><path fill="#dcdcdc" d="M3.800 11.190L13 5.100l9.200 6.090L13 16.900z"/><path fill="#737373" d="M0 8.986v.91l13 8 13-8v-.91l-13 8z"/>
      </svg>
    </div>
    <div class="credit position-absolute d-flex align-items-center"><svg viewBox="0 0 12 8"><path fill="#4C7BE1" d="M0 0h12v4H0z"/><path fill="#FFD500" d="M0 4h12v3H0z"/><path fill="#E0BC00" d="M0 7h12v1H0z"/></svg><span><a href="#">Leaflet</a> | © <a href="#">OpenStreetMap</a> contributors</span></div>
  </div>
  <section class="story-list"></section>
</main>

<script>
const NS = 'http://www.w3.org/2000/svg';
// [text, start x, end x, baseline, kind]
const places = [
 ['Banda Aceh',669,790,497],['Kangar',915,988,456],['George Town',890,1026,503],['Kuala Terengganu',1094,1281,524],['Ipoh',969,1016,574],['Medan',847,918,586],['Kuantan',1052,1136,608],['Kuala Lumpur',948,1092,643],['Singapore',1067,1170,687],['Tanjungpinang',1068,1222,746],['Jambi',1078,1135,824],['Bandar Lampung',1093,1271,998],
 ['Sumatra',972,1062,773,'isle'],['Aceh',764,806,589,'region'],['Sumatera',844,930,677,'region'],['Utara',863,912,700,'region'],['Riau',1000,1037,718,'region'],['Sumatera',906,990,822,'region'],['Barat',924,973,846,'region'],['Sumatera',1101,1186,901,'region'],['Selatan',1111,1176,925,'region'],['Bengkulu',986,1068,948,'region'],['Kepulauan',1211,1306,670,'region'],['Riau',1239,1278,694,'region'],
 ['Kuching',1373,1454,679],['Brunei بروني',1528,1672,558,'nation'],['Malaysia',1723,1826,560,'nation'],['مليسيا',1740,1808,589,'nation'],['Sabah',1690,1745,499,'region'],['Sandakan',1775,1876,500],['Sarawak',1506,1582,630,'region'],['Kalimantan',1661,1764,628,'region'],['Utara',1688,1737,652,'region'],['Borneo',1576,1651,701,'isle'],['Pontianak',1317,1419,751],['Kalimantan',1344,1445,809,'region'],['Barat',1370,1418,832,'region'],['Kalimantan',1662,1764,756,'region'],['Timur',1689,1739,780,'region'],['Balikpapan',1653,1766,840],['Kalimantan',1490,1592,853,'region'],['Tengah',1510,1572,877,'region'],['Kalimantan',1623,1724,907,'region'],['Selatan',1641,1706,930,'region'],
 ['Jawa Tengah',1357,1470,1024,'region'],['Jawa Timur',1528,1629,1086,'region'],['Jakarta',1217,1290,1073],['Semarang',1365,1468,1102],['Malang',1480,1555,1147],['Denpasar',1587,1687,1145],['Sulawesi',1760,1836,986,'region'],['Selatan',1764,1830,1010,'region'],
 ['Zamboanga',1886,2009,408],['City',1929,1966,435],['de Oro',2029,2099,363],['Davao City',2054,2163,428],['General Santos',2010,2167,504],['Sulawesi',2074,2151,644,'region'],['Utara',2088,2137,668,'region'],['Manado',2031,2116,715],['Maluku',2174,2239,737,'region'],['Utara',2182,2231,760,'region'],['Palu',1825,1869,790],['Sulawesi',1904,1981,801,'region'],['Tengah',1911,1974,824,'region'],['Sulawesi',1828,1904,855,'isle'],['Indonesia',1803,1921,881,'nation'],['Kendari',1929,2007,965],['Sulawesi',1970,2047,1006,'region'],['Tenggara',1968,2050,1030,'region'],['Ambon',2187,2263,919],['Maluku',2296,2361,1015,'region'],['Papua',2316,2374,793,'region']
];
const names = document.getElementById('names');
for (const [label, from, to, base, kind] of places) {
  const t = document.createElementNS(NS, 'text');
  t.setAttribute('x', from); t.setAttribute('y', base);
  t.setAttribute('textLength', to - from); t.setAttribute('lengthAdjust', 'spacingAndGlyphs');
  if (/^[\u0600-\u06ff]/.test(label)) { t.setAttribute('direction', 'rtl'); t.setAttribute('x', to); }
  if (kind) t.setAttribute('class', kind);
  t.textContent = label;
  names.append(t);
}
const towns = [[730,504],[952,464],[958,512],[992,548],[1085,516],[1094,584],[882,594],[1146,716],[1108,832],[1182,1006],[1414,688],[1368,760],[1710,813],[1768,492],[1947,442],[2064,370],[2108,436],[2087,480],[2074,690],[1848,798],[1968,940],[2226,926],[1418,1081],[1517,1122]];
const capitals = [[1019,614],[1118,700],[1254,1040]];
let dots = '';
for (const [x, y] of towns) dots += `<rect x="${x - 3}" y="${y - 3}" width="6" height="6" rx="1.5"/>`;
for (const [x, y] of capitals) dots += `<circle cx="${x}" cy="${y}" r="5.2" stroke="#555"/><circle cx="${x}" cy="${y}" r="2" fill="#444" stroke="none"/>`;
document.getElementById('dots').innerHTML = dots;
const stories = [[1852,526],[1708,582],[1594,718],[1534,726],[1432,758],[1562,790],[1504,792],[1652,792],[1598,834],[1224,880],[1644,886],[1816,978],[1238,1024],[1236,1027],[1234,1030],[1240,1029],[1242,1034],[1278,1060],[1246,1062],[1403,1064],[1406,1064],[1286,1074],[1258,1078],[1402,1100],[1504,1108],[1510,1108],[1686,1134],[1508,1150]];
document.getElementById('pins').innerHTML = stories.map(([x, y]) => `<use href="#camera" x="${x - 16}" y="${y - 16}" width="32" height="32"/>`).join('');
</script>
</body>
</html>
